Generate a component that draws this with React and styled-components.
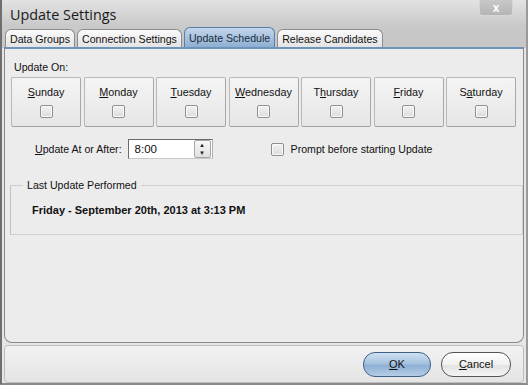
import React from 'react';
import styled, { createGlobalStyle } from 'styled-components';

const Global = createGlobalStyle`
  html, body { margin: 0; padding: 0; background: #d8d8d8; }
  body { font-family: "Liberation Sans", Arial, sans-serif; font-size: 10.6px; color: #111; }
`;

const Window = styled.div`
  width: 528px;
  height: 385px;
  box-sizing: border-box;
  border-left: 2px solid #6f6f6f;
  border-right: 2px solid #9a9a9a;
  border-bottom: 2px solid #8a8a8a;
  background: linear-gradient(#e2e2e2 0px, #c9c9c9 26px, #c6c6c6 48px, #e6e6e6 48px);
  display: flex;
  flex-direction: column;
`;

const TitleBar = styled.div`
  height: 28px;
  display: flex;
  align-items: flex-start;
  justify-content: space-between;
  padding-left: 8px;
  box-sizing: border-box;
`;

const Title = styled.div`
  font-family: "Open Sans", "Liberation Sans", sans-serif;
  font-size: 14.4px;
  color: #1a1a1a;
  margin-top: 5px;
`;

const CloseBox = styled.div`
  width: 32px;
  height: 15px;
  margin-right: 13px;
  border: 1px solid #d6d6d6;
  border-top: none;
  border-radius: 0 0 3px 3px;
  background: linear-gradient(#c8c8c8, #b4b4b4);
  display: flex;
  align-items: center;
  justify-content: center;
  color: #fff;
  font-weight: bold;
  font-size: 12px;
`;

const TabStrip = styled.div`
  display: flex;
  padding-left: 3px;
  gap: 2px;
  height: 19px;
  align-items: flex-end;
`;

const Tab = styled.div`
  height: ${p => (p.$active ? 20 : 18)}px;
  box-sizing: border-box;
  padding: 0 4px;
  display: flex;
  align-items: center;
  border: 1px solid ${p => (p.$active ? '#5a7fa8' : '#8c8c8c')};
  border-bottom: none;
  border-radius: 6px 6px 0 0;
  background: ${p => (p.$active ? 'linear-gradient(#c3d6ea, #8eafd2)' : 'linear-gradient(#fafafa, #e4e4e4)')};
  font-size: 10.6px;
  color: ${p => (p.$active ? '#1d2c40' : '#111')};
`;

const Panel = styled.div`
  margin: 0 2px 0 2px;
  height: 296px;
  box-sizing: border-box;
  border: 1px solid #8a8a8a;
  border-top: 2px solid #6e93bd;
  border-radius: 0 0 8px 8px;
  background: #ececec;
  padding: 12px 6px 0 3px;
  display: flex;
  flex-direction: column;
`;

const Label = styled.div`
  margin-left: 6px;
`;

const DayRow = styled.div`
  display: flex;
  gap: 2.5px;
  margin-top: 4px;
  margin-left: 3px;
`;

const DayButton = styled.div`
  width: 70px;
  height: 50px;
  box-sizing: border-box;
  border: 1px solid #b9b9b9;
  border-right-color: #a8a8a8;
  border-bottom-color: #a0a0a0;
  border-radius: 2px;
  background: linear-gradient(#f4f4f4, #e6e6e6);
  display: flex;
  flex-direction: column;
  align-items: center;
  padding-top: 8px;
  gap: 7px;
  font-size: 10.8px;
`;

const Check = styled.span`
  width: 13px;
  height: 13px;
  box-sizing: border-box;
  border: 1px solid #8f8f8f;
  border-radius: 2px;
  background: linear-gradient(#f2f2f2, #dcdcdc);
  box-shadow: inset 0 0 0 1px #fafafa;
  display: inline-block;
`;

const U = styled.span`
  text-decoration: underline;
`;

const OptionRow = styled.div`
  display: flex;
  align-items: center;
  margin-top: 12px;
  margin-left: 27px;
  height: 20px;
`;

const TimeField = styled.div`
  margin-left: 6px;
  width: 85px;
  height: 20px;
  box-sizing: border-box;
  border: 1px solid #6a6a6a;
  border-right-color: #b0b0b0;
  border-bottom-color: #c8c8c8;
  background: #fff;
  display: flex;
  align-items: center;
  justify-content: space-between;
  padding-left: 6px;
  font-size: 11.5px;
`;

const Spinner = styled.div`
  width: 15px;
  height: 16px;
  margin-right: 1px;
  display: flex;
  flex-direction: column;
  border: 1px solid #a6a6a6;
  border-radius: 2px;
  background: linear-gradient(#f8f8f8, #e0e0e0);
  font-size: 6px;
  line-height: 8px;
  text-align: center;
  color: #222;
`;

const PromptCheck = styled.div`
  display: flex;
  align-items: center;
  gap: 7px;
  margin-left: 58px;
`;

const Group = styled.fieldset`
  margin: 20px 0 0 2px;
  width: 513px;
  height: 56px;
  box-sizing: border-box;
  border: 1px solid #cfcfcf;
  border-left-color: #c4c4c4;
  padding: 0 0 0 21px;
  legend {
    margin-left: -9px;
    padding: 0 4px;
  }
`;

const LastDate = styled.div`
  font-weight: bold;
  font-size: 11px;
  margin-top: 13px;
`;

const ButtonBar = styled.div`
  margin: 2px 2px 0 2px;
  flex: 1;
  border: 1px solid #bdbdbd;
  border-radius: 4px;
  background: linear-gradient(#f2f2f2, #e4e4e4);
  display: flex;
  justify-content: flex-end;
  align-items: center;
  gap: 10px;
  padding-right: 12px;
`;

const DlgButton = styled.div`
  width: ${p => (p.$primary ? 68 : 70)}px;
  height: 25px;
  box-sizing: border-box;
  border: 1px solid ${p => (p.$primary ? '#3e5f86' : '#555')};
  border-radius: 12px;
  background: ${p =>
    p.$primary
      ? 'linear-gradient(#cfe0f1, #a6c2e0 45%, #8eb0d6 55%, #b4cde6)'
      : 'linear-gradient(#ffffff, #f0f0f0 50%, #e2e2e2 51%, #f4f4f4)'};
  display: flex;
  align-items: center;
  justify-content: center;
  font-size: 11px;
  color: #111;
`;

const days = [
  ['', 'S', 'unday'],
  ['', 'M', 'onday'],
  ['', 'T', 'uesday'],
  ['', 'W', 'ednesday'],
  ['T', 'h', 'ursday'],
  ['', 'F', 'riday'],
  ['S', 'a', 'turday'],
];

export default function App() {
  return (
    <>
      <Global />
      <Window>
        <TitleBar>
          <Title>Update Settings</Title>
          <CloseBox>x</CloseBox>
        </TitleBar>
        <TabStrip>
          <Tab>Data Groups</Tab>
          <Tab>Connection Settings</Tab>
          <Tab $active>Update Schedule</Tab>
          <Tab>Release Candidates</Tab>
        </TabStrip>
        <Panel>
          <Label>Update On:</Label>
          <DayRow>
            {days.map(([a, b, c]) => (
              <DayButton key={a + b + c}>
                <span>
                  {a}
                  <U>{b}</U>
                  {c}
                </span>
                <Check />
              </DayButton>
            ))}
          </DayRow>
          <OptionRow>
            <span>
              <U>U</U>pdate At or After:
            </span>
            <TimeField>
              8:00
              <Spinner>
                <span>▲</span>
                <span>▼</span>
              </Spinner>
            </TimeField>
            <PromptCheck>
              <Check />
              Prompt before starting Update
            </PromptCheck>
          </OptionRow>
          <Group>
            <legend>Last Update Performed</legend>
            <LastDate>Friday - September 20th, 2013 at 3:13 PM</LastDate>
          </Group>
        </Panel>
        <ButtonBar>
          <DlgButton $primary>
            <span>
              <U>O</U>K
            </span>
          </DlgButton>
          <DlgButton>
            <span>
              <U>C</U>ancel
            </span>
          </DlgButton>
        </ButtonBar>
      </Window>
    </>
  );
}
